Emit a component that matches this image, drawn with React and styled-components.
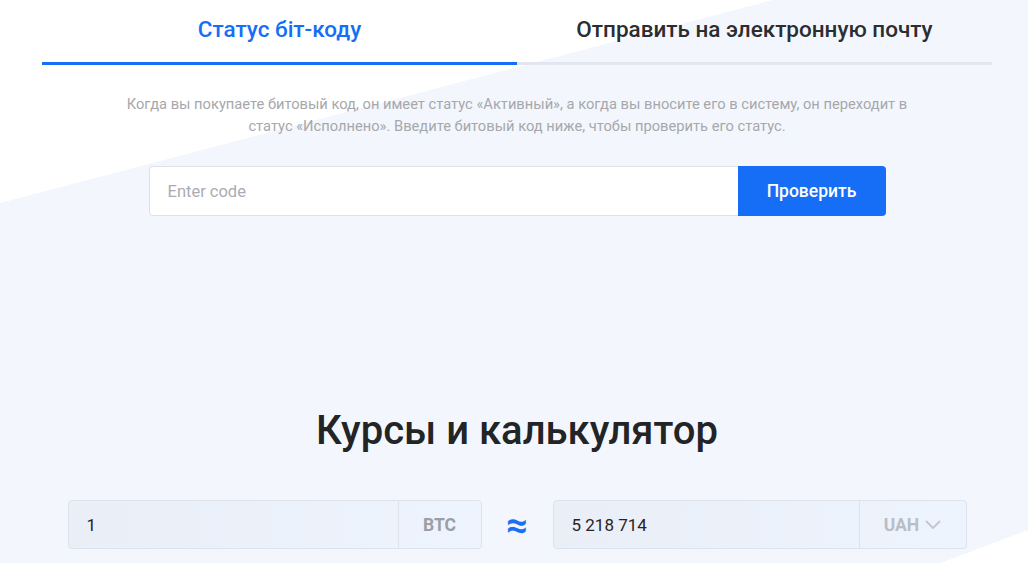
import React, { useState } from "react";
import styled, { createGlobalStyle } from "styled-components";

const GlobalStyle = createGlobalStyle`
    html, body {
        margin: 0;
        padding: 0;
    }
    body {
        font-family: Roboto, "Noto Sans", "Liberation Sans", sans-serif;
        background: #f3f7fd;
    }
    * {
        box-sizing: border-box;
    }
`;

export default function App() {
    const [tab, setTab] = useState(0);
    const [code, setCode] = useState("");

    return (
        <Page>
            <GlobalStyle />
            <Container>
                <Tabs>
                    <Tab active={tab === 0} onClick={() => setTab(0)}>
                        Статус біт-коду
                    </Tab>
                    <Tab active={tab === 1} onClick={() => setTab(1)}>
                        Отправить на электронную почту
                    </Tab>
                </Tabs>

                <Description>
                    Когда вы покупаете битовый код, он имеет статус «Активный», а когда вы вносите его в
                    систему, он переходит в статус «Исполнено». Введите битовый код ниже, чтобы проверить
                    его статус.
                </Description>

                <CheckForm onSubmit={e => e.preventDefault()}>
                    <CodeInput
                        placeholder="Enter code"
                        value={code}
                        onChange={e => setCode(e.target.value)}
                    />
                    <CheckButton type="submit">Проверить</CheckButton>
                </CheckForm>

                <Title>Курсы и калькулятор</Title>

                <Calculator>
                    <AmountBox>
                        <AmountValue>1</AmountValue>
                        <Currency>BTC</Currency>
                    </AmountBox>
                    <Approx>≈</Approx>
                    <AmountBox>
                        <AmountValue>5 218 714</AmountValue>
                        <Currency light>
                            UAH
                            <svg width="16" height="10" viewBox="0 0 16 10" fill="none">
                                <path
                                    d="M1.5 1.5 L8 8 L14.5 1.5"
                                    stroke="#c3c7cd"
                                    strokeWidth="1.8"
                                    strokeLinecap="round"
                                    strokeLinejoin="round"
                                />
                            </svg>
                        </Currency>
                    </AmountBox>
                </Calculator>
            </Container>
        </Page>
    );
}

//------스타일 컴포넌트------
const Page = styled.div`
    min-height: 100vh;
    padding-left: 6px;
    overflow: hidden;
    background-color: #f3f7fd;
    background-image: linear-gradient(to bottom right, #ffffff 50%, transparent 50%),
        linear-gradient(to bottom right, transparent 50%, #ffffff 50%);
    background-size: 773px 203px, 90px 34px;
    background-position: 0 0, right 0 top 530px;
    background-repeat: no-repeat;
`;

const Container = styled.div`
    width: 950px;
    margin: 0 auto;
    display: flex;
    flex-direction: column;
    align-items: center;
`;

const Tabs = styled.div`
    width: 100%;
    display: flex;
`;

const Tab = styled.button`
    flex: 1;
    height: 65px;
    padding: 0 0 5px;
    border: none;
    border-bottom: 3px solid ${props => (props.active ? "#166ef6" : "#e2e7ef")};
    background: transparent;
    font-family: inherit;
    font-size: 22.5px;
    font-weight: 500;
    color: ${props => (props.active ? "#166ef6" : "#2b2d30")};
    cursor: pointer;
`;

const Description = styled.p`
    width: 800px;
    margin: 28px 0 0;
    font-size: 14.7px;
    line-height: 22px;
    color: #a6a8ab;
    text-align: center;
`;

const CheckForm = styled.form`
    display: flex;
    width: 737px;
    height: 50px;
    margin-top: 29px;
`;

const CodeInput = styled.input`
    flex: 1;
    height: 100%;
    padding: 0 18px;
    border: 1px solid #dde2ea;
    border-right: none;
    border-radius: 4px 0 0 4px;
    background: #ffffff;
    font-family: inherit;
    font-size: 16.5px;
    color: #2b2d30;
    outline: none;

    &::placeholder {
        color: #a9acb4;
    }
`;

const CheckButton = styled.button`
    width: 148px;
    height: 100%;
    border: none;
    border-radius: 0 4px 4px 0;
    background: #166ef6;
    font-family: inherit;
    font-size: 17.5px;
    font-weight: 500;
    color: #ffffff;
    cursor: pointer;
`;

const Title = styled.h2`
    margin: 191px 0 0;
    font-size: 40px;
    line-height: 48px;
    font-weight: 500;
    color: #222426;
`;

const Calculator = styled.div`
    display: flex;
    align-items: center;
    width: 899px;
    margin-top: 45px;
`;

const AmountBox = styled.div`
    flex: 1;
    display: flex;
    height: 49px;
    border: 1px solid #dde3ec;
    border-radius: 4px;
    background: linear-gradient(to right, #e9eef7, #eef4fd);
`;

const AmountValue = styled.div`
    flex: 1;
    display: flex;
    align-items: center;
    padding: 0 18px;
    font-size: 17px;
    color: #2b2226;
`;

const Currency = styled.div`
    width: ${props => (props.light ? "107px" : "83px")};
    display: flex;
    align-items: center;
    justify-content: center;
    gap: 6px;
    border-left: 1px solid #dde3ec;
    font-size: 17.5px;
    font-weight: 700;
    color: ${props => (props.light ? "#b9bdc4" : "#9a9ea6")};
`;

const Approx = styled.div`
    width: 71px;
    text-align: center;
    font-size: 38px;
    line-height: 40px;
    font-weight: 700;
    color: #1a6ff5;
`;
